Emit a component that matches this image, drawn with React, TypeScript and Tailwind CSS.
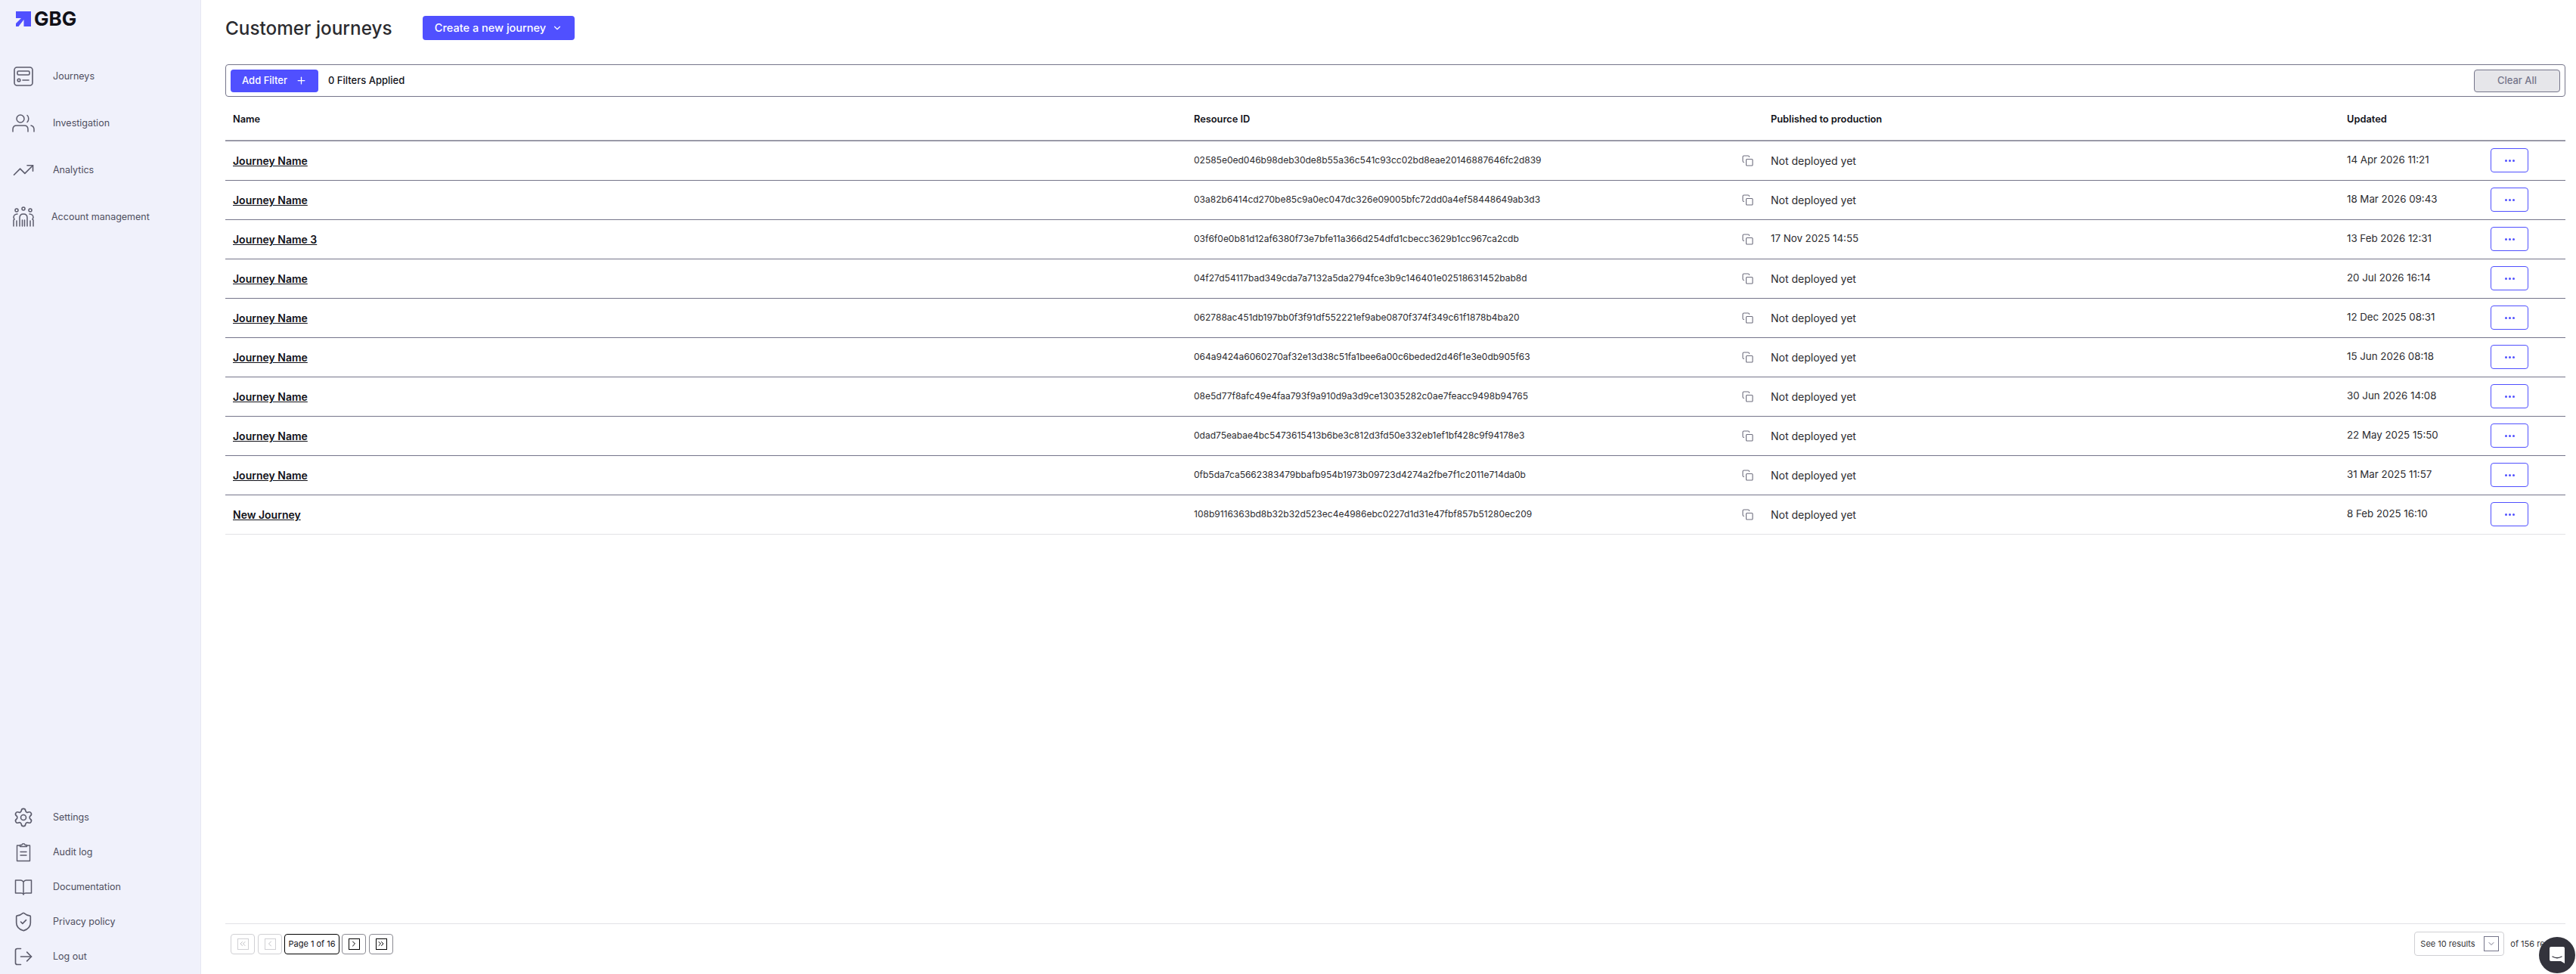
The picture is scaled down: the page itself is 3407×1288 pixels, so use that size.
import { ChevronDown, ChevronLeft, ChevronRight, ChevronsLeft, ChevronsRight, LogOut, Plus, Settings, ShieldCheck, TrendingUp } from "lucide-react";
import type { ReactNode } from "react";

const journeys = [
  { name: "Journey Name", id: "02585e0ed046b98deb30de8b55a36c541c93cc02bd8eae20146887646fc2d839", published: "Not deployed yet", updated: "14 Apr 2026 11:21" },
  { name: "Journey Name", id: "03a82b6414cd270be85c9a0ec047dc326e09005bfc72dd0a4ef58448649ab3d3", published: "Not deployed yet", updated: "18 Mar 2026 09:43" },
  { name: "Journey Name 3", id: "03f6f0e0b81d12af6380f73e7bfe11a366d254dfd1cbecc3629b1cc967ca2cdb", published: "17 Nov 2025 14:55", updated: "13 Feb 2026 12:31" },
  { name: "Journey Name", id: "04f27d54117bad349cda7a7132a5da2794fce3b9c146401e02518631452bab8d", published: "Not deployed yet", updated: "20 Jul 2026 16:14" },
  { name: "Journey Name", id: "062788ac451db197bb0f3f91df552221ef9abe0870f374f349c61f1878b4ba20", published: "Not deployed yet", updated: "12 Dec 2025 08:31" },
  { name: "Journey Name", id: "064a9424a6060270af32e13d38c51fa1bee6a00c6beded2d46f1e3e0db905f63", published: "Not deployed yet", updated: "15 Jun 2026 08:18" },
  { name: "Journey Name", id: "08e5d77f8afc49e4faa793f9a910d9a3d9ce13035282c0ae7feacc9498b94765", published: "Not deployed yet", updated: "30 Jun 2026 14:08" },
  { name: "Journey Name", id: "0dad75eabae4bc5473615413b6be3c812d3fd50e332eb1ef1bf428c9f94178e3", published: "Not deployed yet", updated: "22 May 2025 15:50" },
  { name: "Journey Name", id: "0fb5da7ca5662383479bbafb954b1973b09723d4274a2fbe7f1c2011e714da0b", published: "Not deployed yet", updated: "31 Mar 2025 11:57" },
  { name: "New Journey", id: "108b9116363bd8b32b32d523ec4e4986ebc0227d1d31e47fbf857b51280ec209", published: "Not deployed yet", updated: "8 Feb 2025 16:10" },
];

function JourneysIcon() {
  return (
    <svg width="28" height="28" viewBox="0 0 28 28" fill="none" stroke="currentColor" strokeWidth="1.6" strokeLinecap="round">
      <rect x="2" y="2" width="24" height="24" rx="3.5" />
      <rect x="6" y="7" width="16" height="5" rx="1.5" />
      <circle cx="8" cy="19" r="1.8" />
      <path d="M13 19h8" />
    </svg>
  );
}

function PeopleIcon() {
  return (
    <svg width="32" height="28" viewBox="0 0 32 28" fill="none" stroke="currentColor" strokeWidth="1.5" strokeLinecap="round">
      <circle cx="12" cy="8" r="5" />
      <path d="M21 3.500c2.400 1.800 2.400 7.200 0 9" />
      <path d="M2 25v-3c0-3 2-5 5-5h10c3 0 5 2 5 5v3" />
      <path d="M26 17c2.400.6 4 2.500 4 5v3" />
    </svg>
  );
}

function TeamIcon() {
  return (
    <svg width="30" height="30" viewBox="0 0 30 30" fill="none" stroke="currentColor" strokeWidth="1.5" strokeLinecap="round">
      <circle cx="15" cy="4" r="2" />
      <circle cx="6" cy="6" r="2" />
      <circle cx="24" cy="6" r="2" />
      <path d="M10 27v-11c0-3 2-5 5-5s5 2 5 5v11" />
      <path d="M13.500 27v-8M16.500 27v-8" />
      <path d="M7 11c-3 0-5 2-5 4.500l1 2.500-1 1v8M23 11c3 0 5 2 5 4.500l-1 2.500 1 1v8" />
      <path d="M6 27v-7M24 27v-7" />
    </svg>
  );
}

function AuditIcon() {
  return (
    <svg width="28" height="28" viewBox="0 0 28 28" fill="none" stroke="currentColor" strokeWidth="1.4" strokeLinecap="round" strokeLinejoin="round">
      <path d="M9.500 5H5.500v20.500h17V5h-4" />
      <path d="M9.500 6.500V4.500h2.300c.4-2.400 4-2.400 4.400 0h2.300v2z" />
      <path d="M10 13.500h8M10 18h8" />
    </svg>
  );
}

function BookIcon() {
  return (
    <svg width="28" height="28" viewBox="0 0 28 28" fill="none" stroke="currentColor" strokeWidth="1.5" strokeLinecap="round" strokeLinejoin="round">
      <path d="M14 7c-1-1-2-2-3.500-2H3.500v17H11c1.500 0 2.500.5 3 1.500.5-1 1.500-1.500 3-1.500h7.500V5H17.500C16 5 15 6 14 7z" />
      <path d="M14 7v17" />
    </svg>
  );
}

function CopyIcon() {
  return (
    <svg width="15" height="15" viewBox="0 0 15 15" fill="none" stroke="#6f6f7f" strokeWidth="1.1" strokeLinecap="round" strokeLinejoin="round">
      <rect x="5.500" y="5.500" width="8.500" height="8.500" rx="1" />
      <path d="M2.500 9.500c-1 0-1.500-.5-1.500-1.500V2.500C1 1.500 1.500 1 2.500 1H8c1 0 1.500.5 1.500 1.500" />
    </svg>
  );
}

function NavItem({ icon, label, indent, tall }: { icon: ReactNode; label: string; indent?: boolean; tall?: boolean }) {
  return (
    <div className={`flex items-center ${tall ? "h-[30px]" : "h-[28px]"}`}>
      <div className="flex w-[70px] justify-center pr-[8px] text-[#5c5c6c]">{icon}</div>
      <span className={`text-[12.5px] text-[#4e4e5e] ${indent ? "-ml-[2px]" : ""}`}>{label}</span>
    </div>
  );
}

function PageButton({ children, disabled }: { children: ReactNode; disabled?: boolean }) {
  return (
    <div className={`flex h-[27px] w-[32px] items-center justify-center rounded-[4px] border ${disabled ? "border-[#d0d0d4]" : "border-[#8a8a92]"}`}>
      <div className={`flex h-[15px] w-[15px] items-center justify-center border ${disabled ? "border-[#d0d0d4] text-[#c0c0c4]" : "border-black text-black"}`}>
        {children}
      </div>
    </div>
  );
}

export default function App() {
  return (
    <div className="flex h-[1288px] w-[3407px] overflow-hidden bg-white font-[Inter,sans-serif] text-[#111118]">
      <aside className="flex w-[266px] shrink-0 flex-col justify-between border-r border-[#e6e7f2] bg-[#f0f1fb] pb-[9px]">
        <div>
          <div className="flex items-center pt-[9px] pl-[21px]">
            <svg width="20" height="20" viewBox="0 0 20 20" fill="#5050ff">
              <path d="M0 0h20v20h-9.500V11L3.500 20H0v-4l7-7H0z" />
            </svg>
            <span className="ml-[4px] text-[26px] leading-[32px] font-bold text-[#111118]">GBG</span>
          </div>
          <nav className="mt-[45px] flex flex-col gap-[32px]">
            <NavItem tall icon={<JourneysIcon />} label="Journeys" />
            <NavItem tall icon={<PeopleIcon />} label="Investigation" />
            <NavItem tall icon={<TrendingUp size={30} strokeWidth={1.3} />} label="Analytics" />
            <NavItem tall icon={<TeamIcon />} label="Account management" indent />
          </nav>
        </div>
        <nav className="flex flex-col gap-[18px]">
          <NavItem icon={<Settings size={28} strokeWidth={1.4} />} label="Settings" />
          <NavItem icon={<AuditIcon />} label="Audit log" />
          <NavItem icon={<BookIcon />} label="Documentation" />
          <NavItem icon={<ShieldCheck size={28} strokeWidth={1.4} />} label="Privacy policy" />
          <NavItem icon={<LogOut size={28} strokeWidth={1.4} />} label="Log out" />
        </nav>
      </aside>

      <main className="flex min-w-0 flex-1 flex-col pr-[14px] pl-[32px]">
        <div className="mt-[21px] flex h-[32px] items-center">
          <h1 className="w-[220px] text-[24.3px] font-medium whitespace-nowrap text-[#2b2b2f]">Customer journeys</h1>
          <button type="button" className="ml-[41px] flex h-[32px] w-[201px] items-center justify-center gap-[8px] rounded-[4px] bg-[#5050ff] text-[14.5px] font-medium text-white">
            Create a new journey
            <ChevronDown size={14} strokeWidth={2} />
          </button>
        </div>

        <div className="mt-[32px] flex h-[43px] items-center justify-between rounded-[4px] border border-[#75758a] px-[6px]">
          <div className="flex items-center">
            <button type="button" className="flex h-[30px] w-[116px] items-center justify-center gap-[11px] rounded-[4px] bg-[#5050ff] text-[13px] font-medium text-white">
              Add Filter
              <Plus size={15} strokeWidth={2} />
            </button>
            <span className="ml-[13px] text-[13px] font-medium text-[#111118]">0 Filters Applied</span>
          </div>
          <button type="button" className="h-[30px] w-[114px] rounded-[4px] border border-[#75758a] bg-[#e6e6ea] text-[13px] font-medium text-[#75758a]">
            Clear All
          </button>
        </div>

        <table className="mt-[2px] w-full table-fixed border-collapse">
          <colgroup>
            <col className="w-[1271px]" />
            <col className="w-[763px]" />
            <col className="w-[762px]" />
            <col />
          </colgroup>
          <thead>
            <tr className="h-[56px] border-b-2 border-[#9a9aa8] text-left text-[12.8px] font-semibold">
              <th className="pl-[10px] font-semibold">Name</th>
              <th className="pl-[10px] font-semibold">Resource ID</th>
              <th className="pl-[10px] font-semibold">Published to production</th>
              <th className="pl-[10px] font-semibold">Updated</th>
            </tr>
          </thead>
          <tbody>
            {journeys.map((journey, i) => (
              <tr key={journey.id} className={`h-[52px] border-b ${i === journeys.length - 1 ? "border-[#e2e2e6]" : "border-[#75758a]"}`}>
                <td className="pl-[10px]">
                  <a href="#" className="text-[14px] font-semibold underline">{journey.name}</a>
                </td>
                <td className="pl-[10px]">
                  <div className="flex items-center justify-between pr-[13px]">
                    <span className="text-[12px] text-[#2b2b2f]">{journey.id}</span>
                    <CopyIcon />
                  </div>
                </td>
                <td className={`pl-[10px] text-[#2b2b2f] ${journey.published === "Not deployed yet" ? "text-[14px]" : "text-[13.3px]"}`}>{journey.published}</td>
                <td className="pl-[10px]">
                  <div className="flex items-center justify-between pr-[49px]">
                    <span className="text-[13.3px] text-[#2b2b2f]">{journey.updated}</span>
                    <button type="button" className="flex h-[32px] w-[50px] items-center justify-center gap-[2px] rounded-[4px] border border-[#5050ff]">
                      <span className="h-[3px] w-[3px] rounded-full bg-[#5050ff]" />
                      <span className="h-[3px] w-[3px] rounded-full bg-[#5050ff]" />
                      <span className="h-[3px] w-[3px] rounded-full bg-[#5050ff]" />
                    </button>
                  </div>
                </td>
              </tr>
            ))}
          </tbody>
        </table>

        <div className="mt-auto flex h-[67px] items-center justify-between border-t border-[#e2e2e6] pr-[3px] pb-[14px] pl-[7px]">
          <div className="flex items-center gap-[4px]">
            <PageButton disabled><ChevronsLeft size={12} /></PageButton>
            <PageButton disabled><ChevronLeft size={12} /></PageButton>
            <div className="-mx-[1px] flex h-[27px] w-[73px] items-center justify-center rounded-[4px] border border-black text-[11px]">Page 1 of 16</div>
            <PageButton><ChevronRight size={12} /></PageButton>
            <PageButton><ChevronsRight size={12} /></PageButton>
          </div>
          <div className="flex items-center gap-[8px]">
            <div className="flex h-[32px] w-[119px] items-center justify-between rounded-[4px] border border-[#d0d0d4] pr-[6px] pl-[7px] text-[11px] text-[#333338]">
              See 10 results
              <div className="flex h-[20px] w-[20px] items-center justify-center border border-[#75758a] text-[#75758a]">
                <ChevronDown size={12} />
              </div>
            </div>
            <span className="text-[11px] text-[#333338]">of 156 results</span>
          </div>
        </div>
      </main>

      <div className="absolute top-[1239px] left-[3358px] flex h-[48px] w-[48px] items-center justify-center rounded-full bg-[#33333c]">
        <svg width="22" height="24" viewBox="0 0 22 24" fill="none">
          <path d="M1 3a2 2 0 0 1 2-2h16a2 2 0 0 1 2 2v20l-5-3H3a2 2 0 0 1-2-2z" fill="#fff" />
          <path d="M5 14c3.500 2 8.500 2 12 0" stroke="#33333c" strokeWidth="1.4" strokeLinecap="round" />
        </svg>
      </div>
    </div>
  );
}
